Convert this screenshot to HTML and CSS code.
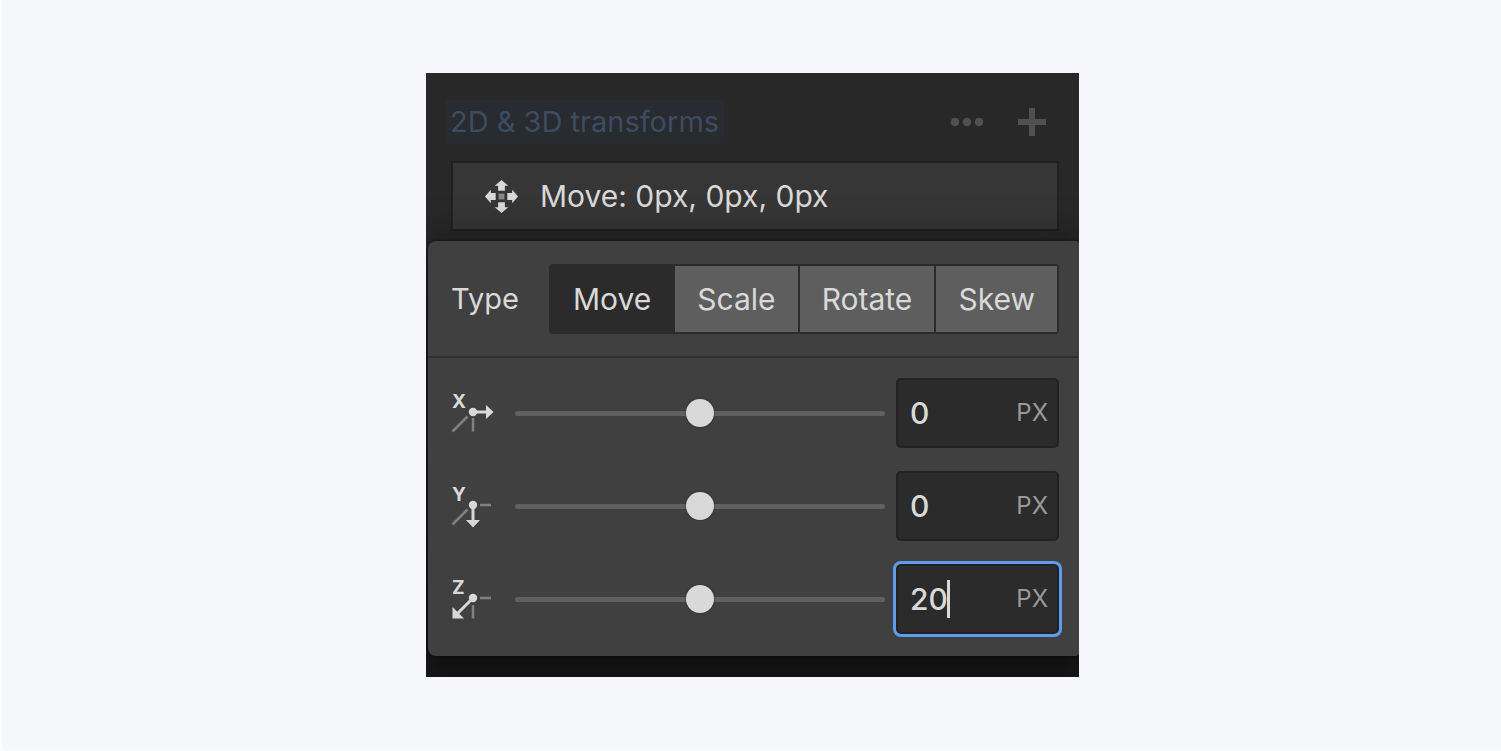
FILE: index.html
```html
<!DOCTYPE html>
<html lang="en">
<head>
<meta charset="utf-8">
<meta name="viewport" content="width=device-width, initial-scale=1">
<title>2D &amp; 3D transforms</title>
<link rel="stylesheet" href="styles.css">
</head>
<body>
<main class="stage">
  <section class="panel">
    <header class="panel-header">
      <button class="panel-title" type="button">2D &amp; 3D transforms</button>
      <div class="panel-actions">
        <button class="icon-button" type="button" aria-label="More options">
          <svg width="34" height="28" viewBox="0 0 34 28" fill="currentColor"><circle cx="5" cy="14" r="4.3"/><circle cx="17" cy="14" r="4.3"/><circle cx="29" cy="14" r="4.3"/></svg>
        </button>
        <button class="icon-button" type="button" aria-label="Add transform">
          <svg width="28" height="28" viewBox="0 0 28 28" fill="currentColor"><path d="M11 0h6v11h11v6H17v11h-6V17H0v-6h11z"/></svg>
        </button>
      </div>
    </header>

    <button class="layer" type="button">
      <svg width="33" height="33" viewBox="0 0 34 34" fill="currentColor"><path d="M17 0l7 6h-3.500v5h-7V6H10zM17 34l7-6h-3.500v-5h-7v5H10zM0 17l6-7v3.500h5v7H6V24zM34 17l-6-7v3.500h-5v7h5V24z"/><path opacity=".5" d="M14 14h6v6h-6z"/></svg>
      <span>Move: 0px, 0px, 0px</span>
    </button>

    <div class="popover">
      <div class="type-row">
        <span class="type-label" id="type-label">Type</span>
        <div class="segments" role="group" aria-labelledby="type-label">
          <button class="segment segment-active" type="button" aria-pressed="true">Move</button>
          <button class="segment" type="button" aria-pressed="false">Scale</button>
          <button class="segment" type="button" aria-pressed="false">Rotate</button>
          <button class="segment" type="button" aria-pressed="false">Skew</button>
        </div>
      </div>

      <div class="axes">
        <div class="axis">
          <label class="axis-label" for="x-value" aria-label="X">
            <svg width="42" height="42" viewBox="0 0 42 42"><text class="axis-letter" x="0" y="16">X</text><path class="axis-line" d="M0.500 39.500 15.500 24.500M21 26v13.500"/><path class="axis-arrow" d="M21 20h14"/><circle class="axis-fill" cx="21" cy="20" r="4.200"/><path class="axis-fill" d="M34 13l7.500 7-7.500 7z"/></svg>
          </label>
          <input class="slider" type="range" min="-100" max="100" value="0" aria-label="Move X">
          <div class="field"><input class="value" id="x-value" type="text" value="0"><span class="unit">PX</span></div>
        </div>
        <div class="axis">
          <label class="axis-label" for="y-value" aria-label="Y">
            <svg width="42" height="42" viewBox="0 0 42 42"><text class="axis-letter" x="0" y="16">Y</text><path class="axis-line" d="M0.500 39.500 15.500 24.500M28 20h11"/><path class="axis-arrow" d="M21 20v16"/><circle class="axis-fill" cx="21" cy="20" r="4.200"/><path class="axis-fill" d="M14 35h14l-7 7.500z"/></svg>
          </label>
          <input class="slider" type="range" min="-100" max="100" value="0" aria-label="Move Y">
          <div class="field"><input class="value" id="y-value" type="text" value="0"><span class="unit">PX</span></div>
        </div>
        <div class="axis">
          <label class="axis-label" for="z-value" aria-label="Z">
            <svg width="42" height="42" viewBox="0 0 42 42"><text class="axis-letter" x="0" y="16">Z</text><path class="axis-line" d="M28 20h11M21 27v13.500"/><path class="axis-arrow" d="M21 20 5 36"/><circle class="axis-fill" cx="21" cy="20" r="4.200"/><path class="axis-fill" d="M0.500 29v11.500h11.500z"/></svg>
          </label>
          <input class="slider" type="range" min="-100" max="100" value="0" aria-label="Move Z">
          <div class="field field-focused"><input class="value" id="z-value" type="text" value="20"><span class="caret"></span><span class="unit">PX</span></div>
        </div>
      </div>
    </div>
  </section>
</main>
</body>
</html>
```
FILE: styles.css
```css
* {
  box-sizing: border-box;
}

body {
  margin: 0;
  background: #f5f7fa;
  color: #d9d9d9;
  font-family: Inter, "Liberation Sans", sans-serif;
  font-size: 30px;
  line-height: 36px;
}

button,
input {
  margin: 0;
  border: 0;
  color: inherit;
  font: inherit;
}

svg {
  display: block;
  flex: none;
  overflow: visible;
}

.stage {
  display: flex;
  align-items: center;
  justify-content: center;
  min-height: 100vh;
  padding-left: 2px;
  border-left: 2px solid #fcfdfd;
  border-bottom: 1px solid #fcfdfd;
}

.panel {
  width: 100%;
  max-width: 653px;
  padding: 27px 0 21px 2px;
  overflow: hidden;
  background: linear-gradient(#282828 30%, #1a1a1a);
}

.panel-header {
  display: flex;
  align-items: center;
  justify-content: space-between;
  padding: 0 33px 0 17px;
}

.panel-title {
  padding: 4px 5px;
  border-radius: 4px;
  background: #282b30;
  color: #3d4d61;
  font-size: 29px;
}

.panel-actions {
  display: flex;
  gap: 34px;
}

.icon-button {
  padding: 0;
  background: none;
  color: #505050;
}

.layer {
  display: flex;
  align-items: center;
  gap: 22px;
  width: calc(100% - 43px);
  height: 70px;
  margin: 17px 20px 10px 23px;
  padding: 0 32px;
  border: 2px solid #202020;
  background: #363636;
  text-align: left;
}

.popover {
  position: relative;
  border-radius: 8px 3px 3px 8px;
  background: #404040;
  box-shadow: 0 0 3px rgba(0, 0, 0, 0.6), 0 10px 40px 8px rgba(0, 0, 0, 0.5);
}

.type-row {
  display: flex;
  align-items: center;
  gap: 30px;
  padding: 23px 20px 22px 23px;
  border-bottom: 2px solid #303030;
}

.type-label {
  flex: none;
  font-size: 29px;
}

.segments {
  display: flex;
  flex: 1;
  gap: 2px;
  padding: 2px;
  border-radius: 4px;
  background: #2b2b2b;
}

.segment {
  flex: 1 1 auto;
  padding: 15px 0;
  background: #5e5e5e;
}

.segment-active {
  background: #2b2b2b;
}

.axes {
  display: grid;
  gap: 23px;
  padding: 20px 20px 22px 24px;
}

.axis {
  display: flex;
  align-items: center;
}

.axis-label {
  margin-right: 21px;
}

.axis-letter {
  fill: #d9d9d9;
  font-size: 19px;
  font-weight: 700;
}

.axis-line {
  fill: none;
  stroke: #808080;
  stroke-width: 2.500px;
}

.axis-arrow {
  fill: none;
  stroke: #d9d9d9;
  stroke-width: 3px;
}

.axis-fill {
  fill: #d9d9d9;
}

.slider {
  flex: 1;
  min-width: 0;
  height: 28px;
  margin-right: 11px;
  appearance: none;
  background: none;
}

.slider::-webkit-slider-runnable-track {
  height: 5px;
  border-radius: 3px;
  background: #606060;
}

.slider::-webkit-slider-thumb {
  width: 28px;
  height: 28px;
  margin-top: -12px;
  appearance: none;
  border-radius: 50%;
  background: #d9d9d9;
  box-shadow: 0 0 2px rgba(0, 0, 0, 0.5);
}

.field {
  position: relative;
  flex: none;
  width: 163px;
}

.value {
  display: block;
  width: 100%;
  height: 70px;
  padding: 0 56px 0 12px;
  border: 2px solid #222222;
  border-radius: 5px;
  outline: 0;
  background: #2b2b2b;
  font-weight: 500;
}

.field-focused .value {
  box-shadow: 0 0 0 3px #5e9ced;
}

.unit {
  position: absolute;
  top: 17px;
  right: 11px;
  color: #999999;
  font-size: 24px;
}

.caret {
  position: absolute;
  top: 16px;
  left: 51px;
  width: 3px;
  height: 38px;
  background: #d9d9d9;
}
```
